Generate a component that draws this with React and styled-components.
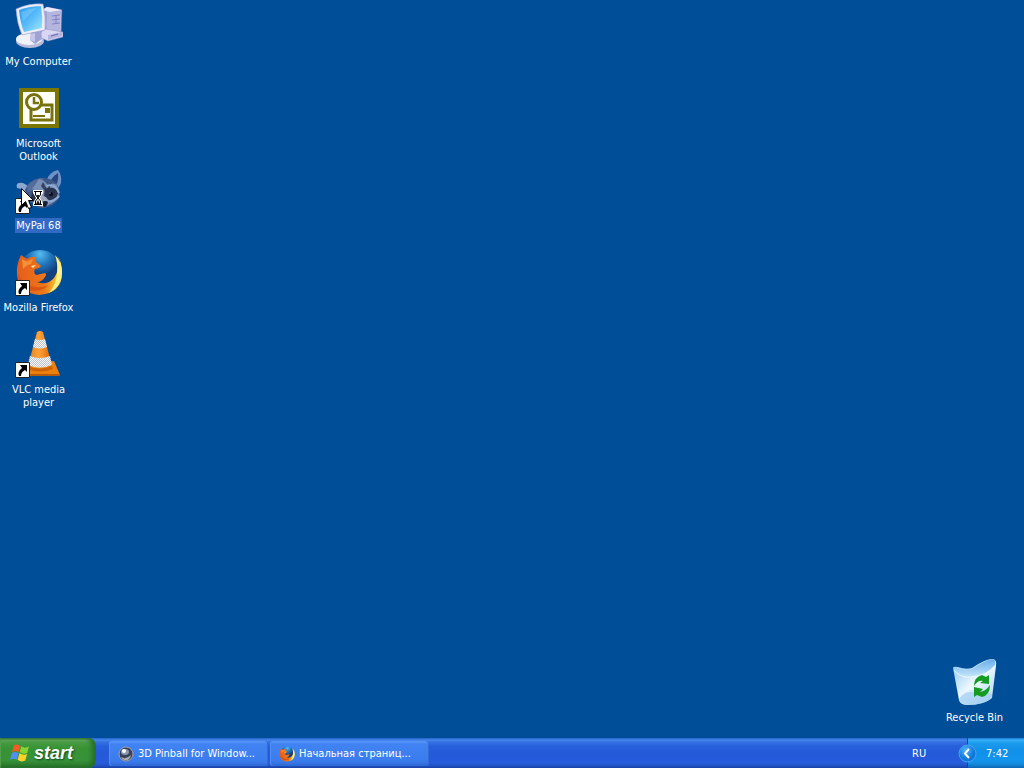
import React from "react";
import styled, { createGlobalStyle } from "styled-components";

const GlobalStyle = createGlobalStyle`
  * { box-sizing: border-box; }
  body {
    margin: 0;
    background: #004e98;
    font-family: Tahoma, "DejaVu Sans Condensed", "Noto Sans", sans-serif;
    font-size: 11px;
    line-height: 13px;
    color: #fff;
  }
  button { font: inherit; color: inherit; border: 0; padding: 0; margin: 0; background: none; }
  svg { display: block; flex: none; }
`;

const Screen = styled.div`
  min-height: 100vh;
  display: flex;
  flex-direction: column;
`;

const Desktop = styled.main`
  flex: 1;
  display: flex;
  justify-content: space-between;
  padding: 2px 11px 0 0;
`;

const IconColumn = styled.div`
  display: flex;
  flex-direction: column;
  gap: 2px;
  justify-content: ${(p) => (p.$bottom ? "flex-end" : "flex-start")};
`;

const IconButton = styled.button`
  position: relative;
  width: 77px;
  height: 80px;
  display: flex;
  flex-direction: column;
  align-items: center;
  gap: 4px;
`;

const Label = styled.span`
  max-width: 75px;
  padding: 1px;
  background: ${(p) => (p.$selected ? "#316ac5" : "transparent")};
`;

const Cursor = styled.span`
  position: absolute;
  left: 20px;
  top: 22px;
`;

const Taskbar = styled.footer`
  height: 30px;
  display: flex;
  align-items: stretch;
  background: linear-gradient(#225fc9 0, #4288ec 2px, #3671e3 4px, #2860dc 8px, #2459d8 15px, #265bdc 25px, #2357cd 27px, #1941a5 30px);
`;

const StartButton = styled.button`
  width: 96px;
  display: flex;
  align-items: center;
  gap: 4px;
  padding: 0 0 0 10px;
  border-radius: 0 8px 8px 0;
  background: linear-gradient(#2f7c2c 0, #68ab62 2px, #459a41 5px, #389335 10px, #37923a 22px, #308431 26px, #216b27 30px);
  box-shadow: inset -4px 0 5px #246d2b, inset 1px 0 1px #57a34f;
`;

const StartText = styled.span`
  font-family: "Liberation Sans", Arial, sans-serif;
  font-size: 18px;
  line-height: 20px;
  font-weight: bold;
  font-style: italic;
  text-shadow: 1px 1px 2px #16461a;
`;

const TaskList = styled.nav`
  flex: 1;
  display: flex;
  gap: 2px;
  padding: 3px 0 2px 13px;
`;

const TaskButton = styled.button`
  width: 159px;
  display: flex;
  align-items: center;
  gap: 4px;
  padding: 0 9px;
  border-radius: 3px;
  background: linear-gradient(#5b98f8 0, #4183f2 3px, #3b7cee 19px, #3775e4 22px, #2e68d2 25px);
  box-shadow: inset 1px 0 #5590f5, inset -1px 0 #316cd8;
  white-space: nowrap;
`;

const Language = styled.button`
  width: 55px;
  text-align: left;
`;

const Tray = styled.div`
  position: relative;
  width: 57px;
  display: flex;
  align-items: center;
  padding-left: 18px;
  border-left: 1px solid #1446a0;
  background: linear-gradient(#107ad6 0, #39b0f5 2px, #1b9bec 5px, #1290e8 12px, #1294ed 22px, #158adc 26px, #0c65b6 30px);
`;

const TrayToggle = styled.button`
  position: absolute;
  left: -10px;
  top: 6px;
`;

function Shortcut() {
  return (
    <g>
      <path fill="#fff" stroke="#222" d="M.5 32.5h14v15H.5z" />
      <path d="M5 35h7v7l-2-2q-4 2-4 6H4q-2-4 3-8z" fill="#000" />
    </g>
  );
}

function ComputerIcon() {
  return (
    <svg width="48" height="48" viewBox="0 0 48 48" aria-hidden="true">
      <defs>
        <linearGradient id="screen" x1="0" y1="0" x2="1" y2="1">
          <stop stopColor="#2b9bed" /><stop offset=".5" stopColor="#58bafa" /><stop offset="1" stopColor="#a0eafa" />
        </linearGradient>
        <linearGradient id="tower"><stop stopColor="#9496cb" /><stop offset="1" stopColor="#cccbea" /></linearGradient>
      </defs>
      <path d="M27 8l5-3 15 3-1 26-14 4-7-5z" fill="url(#tower)" stroke="#6868a8" strokeWidth=".6" />
      <path d="M32 9l14-1-1 22-13 1z" fill="#b5b6df" />
      <path d="M27 8l5-3 15 3-12 2z" fill="#eae9fb" />
      <path d="M37 14l8-1M37 18l8-1M37 22l8-1M41 13v9" stroke="#8082c3" />
      <path d="M27 29l4-2 17 3v5l-15 4-9-4z" fill="#d8d8f4" stroke="#8889bd" strokeWidth=".5" />
      <path d="M33 33l14-3v4l-14 4z" fill="#b5b5df" />
      <path d="M36 34l7-2" stroke="#6666a9" />
      <ellipse cx="15" cy="39" rx="14" ry="7" fill="#b9bbdc" />
      <ellipse cx="14" cy="37" rx="13" ry="6" fill="#f1f1f8" />
      <path d="M16 31l10-3 1 9-7 5-5-4z" fill="#a1a2d4" />
      <path d="M16 32l4-1v9l-5-2z" fill="#c5c6eb" />
      <path d="M1 7Q14 1 28 2q3 13 2 26l-23 5Q2 22 1 7z" fill="#eeeef9" stroke="#9398ce" strokeWidth=".6" />
      <path d="M4 8q11-4 22-4 2 11 1 22L9 30Q5 20 4 8z" fill="url(#screen)" />
      <path d="M6 10q7-3 15-4L8 19z" fill="#aaddfd" opacity=".3" />
    </svg>
  );
}

function OutlookIcon() {
  return (
    <svg width="48" height="48" viewBox="0 0 48 48" aria-hidden="true">
      <path d="M4 4h40v40H4z" fill="#7b7600" />
      <path d="M8 8h32v32H8z" fill="#fffff5" />
      <path d="M16 21h21v15H16z" fill="#fff" stroke="#77720a" strokeWidth="3" />
      <circle cx="19" cy="18" r="7.500" fill="#fff" stroke="#77720a" strokeWidth="3" />
      <path d="M19 13v6h5" fill="none" stroke="#77720a" strokeWidth="2.500" />
      <path d="M30 24h5v5h-5z" fill="#77720a" />
      <path d="M18 32h12" stroke="#77720a" strokeWidth="2" />
    </svg>
  );
}

function RaccoonIcon() {
  return (
    <svg width="48" height="48" viewBox="0 0 48 48" aria-hidden="true">
      <path d="M32 13q3-7 11-9 4 5 3 13l-4 8z" fill="#6f91c8" />
      <path d="M36 14q3-5 7-7 1 5-1 11z" fill="#26467e" />
      <path d="M2 22q-2-6 6-5l7 4-5 6-4-4z" fill="#8ba6cf" />
      <path d="M10 24q4-11 15-12 13-1 18 8 5 11-2 16-7 7-17 6L12 34z" fill="#3f5886" />
      <path d="M12 20q7-8 17-8l-7 8q-4 5-9 6z" fill="#536c9c" />
      <path d="M24 13q7 1 9 8 4-6 9-2 5 11-3 17-9 6-14 4 4-4 1-9-2-6-9-8z" fill="#788fb7" />
      <path d="M28 16l4 7 4-6-3 12-7-9z" fill="#36445f" />
      <path d="M30 23q10-4 13 4-2 8-8 8l-6-5z" fill="#29354c" />
      <path d="M17 26q5-3 9 2l-2 9-8-5z" fill="#273247" />
      <path d="M31 20q9-3 13 7M30 35q8 2 14-5" fill="none" stroke="#8da9d6" strokeWidth="2" />
      <path d="M25 29l6 2 3 6-6 4-5-3z" fill="#a0a9bc" />
      <path d="M27 36q4-2 6 0-1 5-4 5-3-2-2-5z" fill="#14203a" />
      <circle cx="36" cy="28" r="2" fill="#080d18" />
      <circle cx="35" cy="27" r=".6" fill="#dbe5ff" />
      <Shortcut />
    </svg>
  );
}

function FoxGlobe({ small = false }) {
  const size = small ? 16 : 48;
  const suffix = small ? "-small" : "";
  return (
    <svg width={size} height={size} viewBox="0 0 48 48" aria-hidden="true">
      <defs>
        <radialGradient id={`foxglobe${suffix}`} cx=".5" cy=".1">
          <stop stopColor="#55bdf0" /><stop offset=".5" stopColor="#2478be" /><stop offset="1" stopColor="#113f80" />
        </radialGradient>
        <linearGradient id={`foxfur${suffix}`}>
          <stop stopColor="#e65d1d" /><stop offset=".6" stopColor="#ec7618" /><stop offset=".85" stopColor="#f7b92b" /><stop offset="1" stopColor="#fce54c" />
        </linearGradient>
      </defs>
      <circle cx="25" cy="23" r="21" fill={`url(#foxglobe${suffix})`} />
      <path d="M6 7q3 2 6 4 4-3 9-2-1 3 0 5l5 4q-1 2-6 3-2 3 1 6l9-2q2 1 0 4-3 5-8 5 10 4 17-4 5-7 4-16l2 2q0-4-3-8 5 5 5 17 0 20-23 22Q4 45 2 27 1 17 6 7z" fill={`url(#foxfur${suffix})`} />
      <path d="M40 7q7 7 7 18-1 14-13 20 8-10 8-20 1-10-2-18z" fill="#fff08a" />
      <path d="M3 25q3 10 13 13 9 3 18-1-9 8-20 5Q5 38 3 25z" fill="#ce4312" opacity=".6" />
      <path d="M7 11q4 3 6 2l5-2-2 5q-5 1-8 5z" fill="#f49035" />
      <path d="M16 18l5-1-3 3z" fill="#fff1b3" />
      {!small && <Shortcut />}
    </svg>
  );
}

function VlcIcon() {
  return (
    <svg width="48" height="48" viewBox="0 0 48 48" aria-hidden="true">
      <defs>
        <linearGradient id="cone"><stop stopColor="#e27c12" /><stop offset=".45" stopColor="#ffa338" /><stop offset="1" stopColor="#d86104" /></linearGradient>
        <pattern id="mesh" width="2" height="2" patternUnits="userSpaceOnUse">
          <path d="M0 0h2v2H0z" fill="#f7f7f7" /><path d="M0 0h1v1H0zM1 1h1v1H1z" fill="#bdc4cc" />
        </pattern>
      </defs>
      <path d="M9 32l30-1 6 14H4z" fill="#ed7f0c" />
      <path d="M4 44h41v2H4z" fill="#b65a0b" />
      <path d="M22 2q3-2 6 0l9 34q-12 5-24 0z" fill="url(#cone)" />
      <path d="M20 9q5 2 10 0l2 8q-7 3-14 0z" fill="url(#mesh)" />
      <path d="M15 26q10 4 20 0l2 9q-12 5-24 0z" fill="url(#mesh)" />
      <path d="M13 36q12 5 24 0l1 3q-13 5-26 0z" fill="#cb6408" />
      <Shortcut />
    </svg>
  );
}

function RecycleIcon() {
  return (
    <svg width="48" height="48" viewBox="0 0 48 48" aria-hidden="true">
      <defs>
        <linearGradient id="bin" x1="0" y1="0" x2="1" y2="1"><stop stopColor="#83c0ef" /><stop offset=".5" stopColor="#edf9ff" /><stop offset="1" stopColor="#a7d2f6" /></linearGradient>
        <linearGradient id="rim" x1="0" y1="0" x2="0" y2="1"><stop stopColor="#66aceb" /><stop offset="1" stopColor="#c6e6fb" /></linearGradient>
      </defs>
      <path d="M2 10q0-2 5-1 8 3 14 1Q34 1 42 1q4 1 3 7l-4 32q-8 7-24 7-8 0-9-5z" fill="url(#bin)" />
      <path d="M3 10q9 3 18 1Q34 2 42 1q3 1 2 6-9 12-25 12Q8 19 3 10z" fill="url(#rim)" />
      <path d="M8 41q3-8 13-9 13-1 20 5l-1 4q-9 6-23 6-8-1-9-6z" fill="#9fccf2" opacity=".7" />
      <path d="M8 40q5-8 17-7" fill="none" stroke="#f4fbff" />
      <path d="M3 12q6 8 16 7 16-1 25-11" fill="none" stroke="#fff" opacity=".7" />
      <g fill="#159b22">
        <path d="M23 28q0-9 8-11l4 2 3-2v9l-9-1 3-2q-5-1-9 5z" />
        <path d="M39 27q0 10-8 12l-5-2-3 2v-10l9 2-3 3q6-1 10-7z" />
      </g>
    </svg>
  );
}

function BusyPointer() {
  return (
    <svg width="24" height="21" viewBox="0 0 24 21" aria-hidden="true">
      <path d="M1.500.5v17l4-4 3 7 3-1-3-7h5z" fill="#fff" stroke="#000" />
      <path d="M13 2h10v3l-3 5 3 5v3H13v-3l3-5-3-5z" fill="#fff" />
      <path d="M14 3.500h8M14 16.500h8" stroke="#000" />
      <path d="M15.500 4v3l5 6v3M20.500 4v3l-5 6v3" stroke="#000" fill="none" />
      <path d="M16 7h4l-2 3zM18 12l2 4h-4z" fill="#222" />
    </svg>
  );
}

function WindowsFlag() {
  return (
    <svg width="20" height="20" viewBox="0 0 21 20" aria-hidden="true">
      <path d="M4 2q4-2 7 1L9 9Q6 7 2 9z" fill="#f35b24" />
      <path d="M12 3q4 3 8 0l-2 7q-4 2-8-1z" fill="#86d632" />
      <path d="M2 10q3-2 7 0l-2 7q-3-2-7 0z" fill="#4e91f5" />
      <path d="M10 10q4 3 8 1l-2 7q-4 2-8-1z" fill="#ffd22a" />
    </svg>
  );
}

function PinballIcon() {
  return (
    <svg width="16" height="16" viewBox="0 0 16 16" aria-hidden="true">
      <circle cx="8" cy="8" r="7" fill="#394158" stroke="#a0a4b0" />
      <path d="M3 11q5 3 10-2-1 6-6 5-3 0-4-3z" fill="#b0aead" />
      <ellipse cx="7" cy="6" rx="4" ry="3" fill="#8f98b2" />
      <circle cx="6" cy="5" r="2" fill="#fff" />
    </svg>
  );
}

function TrayArrow() {
  return (
    <svg width="19" height="19" viewBox="0 0 19 19" aria-hidden="true">
      <defs><radialGradient id="arrow" cx=".4" cy=".3"><stop stopColor="#55b5fa" /><stop offset="1" stopColor="#0e78dc" /></radialGradient></defs>
      <circle cx="9.500" cy="9.500" r="8.500" fill="url(#arrow)" stroke="#4ba5ef" />
      <path d="M11 5L7 9.500l4 4.500" fill="none" stroke="#fff" strokeWidth="2" />
    </svg>
  );
}

function DesktopIcon({ icon, label, selected, children }) {
  return (
    <IconButton type="button">
      {icon}
      <Label $selected={selected}>{label}</Label>
      {children}
    </IconButton>
  );
}

export default function App() {
  return (
    <Screen>
      <GlobalStyle />
      <Desktop>
        <IconColumn>
          <DesktopIcon icon={<ComputerIcon />} label="My Computer" />
          <DesktopIcon icon={<OutlookIcon />} label="Microsoft Outlook" />
          <DesktopIcon icon={<RaccoonIcon />} label="MyPal 68" selected>
            <Cursor><BusyPointer /></Cursor>
          </DesktopIcon>
          <DesktopIcon icon={<FoxGlobe />} label="Mozilla Firefox" />
          <DesktopIcon icon={<VlcIcon />} label="VLC media player" />
        </IconColumn>
        <IconColumn $bottom>
          <DesktopIcon icon={<RecycleIcon />} label="Recycle Bin" />
        </IconColumn>
      </Desktop>
      <Taskbar>
        <StartButton type="button">
          <WindowsFlag />
          <StartText>start</StartText>
        </StartButton>
        <TaskList aria-label="Open windows">
          <TaskButton type="button"><PinballIcon />3D Pinball for Window...</TaskButton>
          <TaskButton type="button"><FoxGlobe small />Начальная страниц...</TaskButton>
        </TaskList>
        <Language type="button">RU</Language>
        <Tray>
          <TrayToggle type="button" aria-label="Show hidden icons"><TrayArrow /></TrayToggle>
          <time>7:42</time>
        </Tray>
      </Taskbar>
    </Screen>
  );
}
